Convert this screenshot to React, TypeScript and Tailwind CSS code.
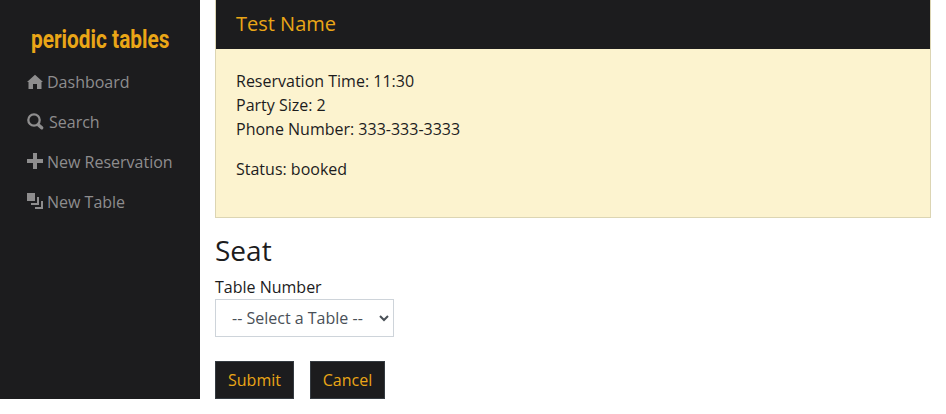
import type { ReactNode } from "react";

const Icon = ({ children, wide }: { children: ReactNode; wide?: boolean }) => (
  <svg className={wide ? "mr-1.5 h-4 w-4 shrink-0 overflow-visible" : "mr-1 h-4 w-4 shrink-0 overflow-visible"} viewBox="0 0 16 16" fill="currentColor">
    {children}
  </svg>
);

const NavItem = ({ icon, label, wide }: { icon: ReactNode; label: string; wide?: boolean }) => (
  <a className="flex h-10 items-center whitespace-nowrap text-base">
    <Icon wide={wide}>{icon}</Icon>
    <span>{label}</span>
  </a>
);

export default function App() {
  return (
    <div className="flex h-[414px] items-start overflow-hidden bg-white font-['Open_Sans',sans-serif] text-base font-normal text-[#1c1c1d]">
      <aside className="h-[399px] w-[200px] shrink-0 bg-[#1c1c1e] pt-[19px] text-[#8e8d8e]">
        <div className="mb-px flex h-[42px] items-center pl-[31px] text-[#eaa617]">
          <span className="origin-left scale-x-[0.833] whitespace-nowrap font-['Roboto',sans-serif] text-[25px] font-bold leading-[42px]">
            periodic tables
          </span>
        </div>
        <nav className="pl-[27px]">
          <NavItem label="Dashboard" icon={<path d="M8 .8 0 8h1.5v7H6v-5h4v5h4.5V8H16l-3-2.7Z" />} />
          <NavItem
            wide
            label="Search"
            icon={
              <>
                <circle cx="7" cy="6" r="5.7" fill="none" stroke="currentColor" strokeWidth="2.3" />
                <path d="m11.5 11 3.2 2.8" stroke="currentColor" strokeWidth="3.4" strokeLinecap="round" />
              </>
            }
          />
          <NavItem label="New Reservation" icon={<path d="M6 -1h4v6h6v4h-6v6H6V9H0V5h6Z" />} />
          <NavItem label="New Table" icon={<path d="M0 -1h8v8H0ZM10 3h2v8H4V9h6ZM14 7h2v8H8v-2h6Z" />} />
        </nav>
      </aside>
      <main className="flex-1 px-[15px]">
        <section className="h-[218px] border border-t-0 border-[#dcd5b3] bg-[#fcf3cf]">
          <h5 className="h-[49px] bg-[#1c1c1e] px-5 pt-3 text-xl leading-6 font-normal text-[#eaa617]">Test Name</h5>
          <div className="p-5">
            <p>Reservation Time: 11:30</p>
            <p>Party Size: 2</p>
            <p>Phone Number: 333-333-3333</p>
            <p className="mt-4">Status: booked</p>
          </div>
        </section>
        <h3 className="mt-[15px] h-[42px] text-[28px] leading-[34px] font-normal">Seat</h3>
        <form>
          <label className="block h-6">Table Number</label>
          <div className="flex h-[38px] w-[179px] items-center justify-between border border-[#ced4da] pr-1 pl-4 text-[#495057]">
            <span>-- Select a Table --</span>
            <svg className="h-[7px] w-[10px]" viewBox="0 0 10 7" fill="none" stroke="currentColor" strokeWidth="2">
              <path d="m1 1 4 4 4-4" />
            </svg>
          </div>
          <div className="mt-6 flex gap-4 text-[#eaa617]">
            <button type="button" className="h-[38px] w-[79px] border border-[#343a40] bg-[#1c1c1e]">Submit</button>
            <button type="button" className="h-[38px] w-[75px] border border-[#343a40] bg-[#1c1c1e]">Cancel</button>
          </div>
        </form>
      </main>
    </div>
  );
}
